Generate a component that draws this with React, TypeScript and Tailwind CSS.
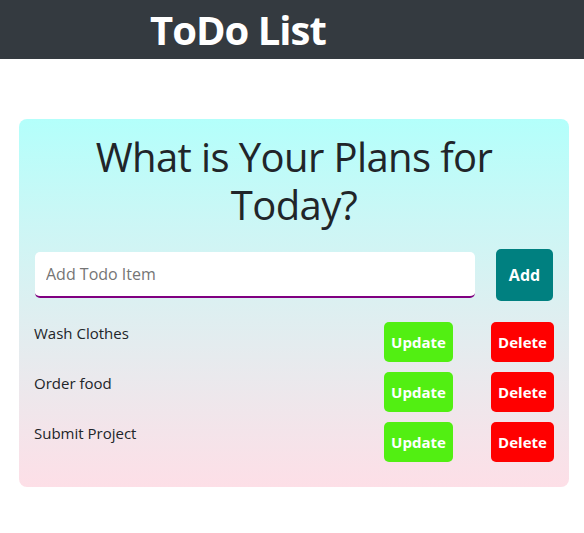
import React, { useState } from 'react';

const App: React.FC = () => {
    const [todos] = useState<string[]>(["Wash Clothes", "Order food", "Submit Project"]);
    const [text, setText] = useState("");

    return (
        <div className="min-h-[533px] bg-white text-[#212529] font-['Open_Sans',sans-serif]">
            <header className="h-[59px] bg-[#343a40] flex items-center pl-[150px]">
                <h1 className="text-[40px] font-bold text-white leading-none tracking-[-1px]">ToDo List</h1>
            </header>

            <section className="pl-[19px] pt-[60px]">
                <div className="w-[550px] rounded-lg bg-linear-to-b from-[#b3fffb] to-[#fddfe7] pt-[14px] pb-[25px]">
                    <h2 className="text-center text-[40px] font-medium leading-[48px] px-[60px] tracking-[-0.6px]">
                        What is Your Plans for Today?
                    </h2>

                    <div className="flex items-center mt-[20px] px-[16px] gap-[21px]">
                        <input
                            value={text}
                            onChange={(e) => setText(e.target.value)}
                            placeholder="Add Todo Item"
                            className="flex-1 h-[46px] bg-white rounded-[5px] border-b-2 border-[#800080] px-[11px] text-base placeholder:text-[#757575] outline-none"
                        />
                        <button className="w-[57px] h-[52px] rounded-[5px] bg-[#008080] text-white font-bold text-base">
                            Add
                        </button>
                    </div>

                    <ul className="mt-[21px] flex flex-col gap-[10px] px-[15px]">
                        {todos.map((todo, index) => (
                            <li key={index} className="flex items-start h-[40px]">
                                <span className="flex-1 text-[15px]">{todo}</span>
                                <button className="w-[69px] h-[40px] rounded-[5px] bg-[#52ef12] text-white font-bold text-[15px]">
                                    Update
                                </button>
                                <button className="ml-[38px] w-[63px] h-[40px] rounded-[5px] bg-[#ff0000] text-white font-bold text-[15px]">
                                    Delete
                                </button>
                            </li>
                        ))}
                    </ul>
                </div>
            </section>
        </div>
    );
};

export default App;
